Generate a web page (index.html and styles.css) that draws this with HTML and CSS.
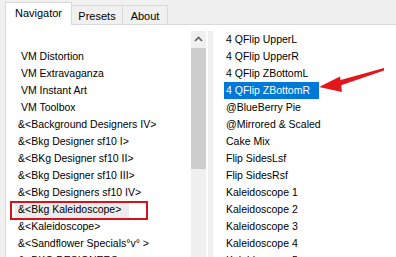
FILE: index.html
```html
<!DOCTYPE html>
<html lang="en">
<head>
  <meta charset="UTF-8">
  <meta name="viewport" content="width=device-width, initial-scale=1.0">
  <title>Filters Navigator</title>
  <link rel="stylesheet" href="styles.css">
</head>
<body>
  <div class="tabs">
    <div class="tab tab-active">Navigator</div>
    <div class="tab tab-presets">Presets</div>
    <div class="tab tab-about">About</div>
  </div>
  <div class="panel">
    <ul class="list list-left">
      <li>&nbsp;</li>
      <li>&nbsp;VM Distortion</li>
      <li>&nbsp;VM Extravaganza</li>
      <li>&nbsp;VM Instant Art</li>
      <li>&nbsp;VM Toolbox</li>
      <li>&amp;&lt;Background Designers IV&gt;</li>
      <li>&amp;&lt;Bkg Designer sf10 I&gt;</li>
      <li>&amp;&lt;BKg Designer sf10 II&gt;</li>
      <li>&amp;&lt;Bkg Designer sf10 III&gt;</li>
      <li>&amp;&lt;Bkg Designers sf10 IV&gt;</li>
      <li class="item-marked">&amp;&lt;Bkg Kaleidoscope&gt;</li>
      <li>&amp;&lt;Kaleidoscope&gt;</li>
      <li>&amp;&lt;Sandflower Specials°v° &gt;</li>
      <li>&amp;&lt;BKG DESIGNERS&gt;</li>
    </ul>
    <div class="scrollbar">
      <div class="scroll-up">
        <svg width="15" height="17" viewBox="0 0 15 17"><path d="M4 10 L7.5 6.5 L11 10" fill="none" stroke="#606060" stroke-width="1.6"/></svg>
      </div>
      <div class="scroll-thumb"></div>
    </div>
    <div class="divider"></div>
    <ul class="list list-right">
      <li>4 QFlip UpperL</li>
      <li>4 QFlip UpperR</li>
      <li>4 QFlip ZBottomL</li>
      <li class="item-selected">4 QFlip ZBottomR</li>
      <li>@BlueBerry Pie</li>
      <li>@Mirrored &amp; Scaled</li>
      <li>Cake Mix</li>
      <li>Flip SidesLsf</li>
      <li>Flip SidesRsf</li>
      <li>Kaleidoscope 1</li>
      <li>Kaleidoscope 2</li>
      <li>Kaleidoscope 3</li>
      <li>Kaleidoscope 4</li>
      <li>Kaleidoscope 5</li>
    </ul>
  </div>
  <!-- стрелка-пометка поверх списка -->
  <svg class="arrow" width="72" height="32" viewBox="0 0 72 32">
    <polygon points="3,23 24,12.5 26,28" fill="#e3161b"/>
    <polygon points="21,17 68,4 68,6.5 23,22" fill="#e3161b"/>
  </svg>
</body>
</html>
```

FILE: styles.css
```css
body {
  margin: 0;
  width: 396px;
  height: 257px;
  overflow: hidden;
  background: #f0f0f0;
  font-family: "Liberation Sans", Arial, sans-serif;
  font-size: 11px;
  color: #000;
  position: relative;
}
.tabs {
  display: flex;
  align-items: flex-end;
  height: 24px;
  margin-left: 5px;
  border-bottom: 1px solid #d9d9d9;
}
.tab {
  box-sizing: border-box;
  height: 19px;
  border: 1px solid #d9d9d9;
  border-bottom: none;
  background: #f0f0f0;
  display: flex;
  align-items: center;
  justify-content: center;
  padding-top: 1px;
}
.tab-active {
  width: 67px;
  height: 23px;
  margin-bottom: -1px;
  background: #fff;
  padding-top: 0;
  padding-bottom: 2px;
}
.tab-presets {
  width: 52px;
  margin-left: -1px;
}
.tab-about {
  width: 46px;
  margin-left: -1px;
}
.panel {
  display: flex;
  height: 232px;
  margin-left: 5px;
  border-left: 1px solid #d9d9d9;
  background: #fff;
}
.list {
  list-style: none;
  margin: 0;
  padding: 6px 0 0 0;
  display: flex;
  flex-direction: column;
  align-items: flex-start;
  font-size: 10.5px;
}
.list li {
  height: 17px;
  line-height: 17px;
  white-space: pre;
}
.list-left {
  width: 185px;
}
.list-left li {
  margin-left: 9px;
  padding: 0 8px 0 3px;
}
.item-marked {
  background: #ececec;
  position: relative;
}
/* красная рамка вокруг пункта */
.item-marked::after {
  content: "";
  position: absolute;
  left: -5px;
  top: 0;
  width: 134px;
  height: 15px;
  border: 2px solid #d4141c;
}
.scrollbar {
  width: 15px;
  margin-top: 6px;
  background: #f0f0f0;
  display: flex;
  flex-direction: column;
}
.scroll-up {
  height: 17px;
}
.scroll-up svg {
  display: block;
}
.scroll-thumb {
  height: 121px;
  background: #cdcdcd;
}
.divider {
  width: 5px;
  margin: 6px 0 0 2px;
  background: #f0f0f0;
}
.list-right li {
  margin-left: 11px;
  padding: 0 9px 0 2px;
}
.item-selected {
  background: #0078d7;
  color: #fff;
}
.arrow {
  position: absolute;
  left: 316px;
  top: 64px;
}
```
